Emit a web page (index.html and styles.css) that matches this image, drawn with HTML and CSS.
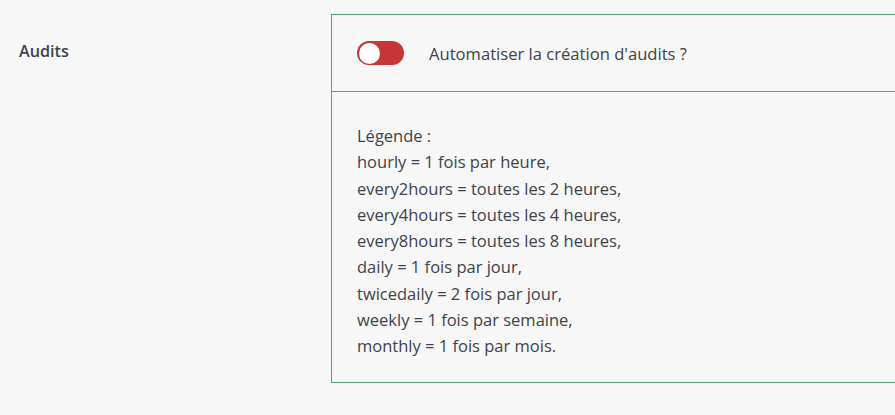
FILE: index.html
```html
<!DOCTYPE html>
<html lang="fr">
<head>
<meta charset="utf-8">
<link rel="stylesheet" href="styles.css">
</head>
<body>
<div class="row">
  <div class="label">Audits</div>
  <div class="box">
    <div class="toggle-row">
      <span class="toggle"><span class="knob"></span></span>
      <span class="toggle-text">Automatiser la création d'audits ?</span>
    </div>
    <div class="legend">
      <div>Légende :</div>
      <div>hourly = 1 fois par heure,</div>
      <div>every2hours = toutes les 2 heures,</div>
      <div>every4hours = toutes les 4 heures,</div>
      <div>every8hours = toutes les 8 heures,</div>
      <div>daily = 1 fois par jour,</div>
      <div>twicedaily = 2 fois par jour,</div>
      <div>weekly = 1 fois par semaine,</div>
      <div>monthly = 1 fois par mois.</div>
    </div>
  </div>
</div>
</body>
</html>
```
FILE: styles.css
```css
html, body {
  margin: 0;
  padding: 0;
  background: #f7f7f7;
  overflow: hidden;
  width: 895px;
  height: 415px;
}
body {
  font-family: "Open Sans", "Noto Sans", sans-serif;
  color: #3c434a;
}
.row {
  display: flex;
  padding-top: 14px;
}
.label {
  width: 312px;
  flex: none;
  padding-left: 19px;
  padding-top: 27px;
  font-size: 16.2px;
  font-weight: 600;
  line-height: 20px;
}
.box {
  flex: none;
  width: 600px;
  border: 1px solid #4ea66a;
  border-right: none;
}
.toggle-row {
  height: 76px;
  display: flex;
  align-items: center;
  padding-left: 25px;
  border-bottom: 1px solid #4ea66a;
}
.toggle {
  width: 47px;
  height: 24px;
  border-radius: 12px;
  background: #c83535;
  display: flex;
  align-items: center;
  padding-left: 2px;
  box-sizing: border-box;
  margin-right: 25px;
}
.knob {
  width: 21px;
  height: 21px;
  border-radius: 50%;
  background: #fff;
}
.toggle-text {
  font-size: 16.6px;
}
.legend {
  padding: 31px 25px 22px;
  font-size: 16.5px;
  line-height: 26.3px;
}
```
